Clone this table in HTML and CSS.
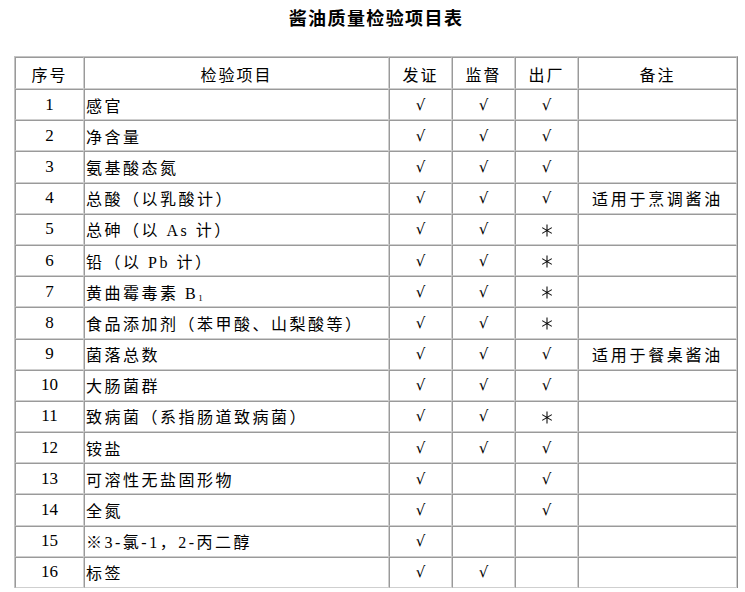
FILE: index.html
```html
<!DOCTYPE html>
<html lang="zh-CN">
<head>
<meta charset="utf-8">
<title>酱油质量检验项目表</title>
<link rel="stylesheet" href="styles.css">
</head>
<body>
<div class="page">
  <h1 class="title">酱油质量检验项目表</h1>
  <table class="grid">
    <colgroup>
      <col class="c-no"><col class="c-item"><col class="c-chk"><col class="c-chk"><col class="c-chk"><col class="c-note">
    </colgroup>
    <thead>
      <tr class="head"><th>序号</th><th>检验项目</th><th>发证</th><th>监督</th><th>出厂</th><th>备注</th></tr>
    </thead>
    <tbody>
      <tr><td class="no">1</td><td class="item">感官</td><td class="mk">√</td><td class="mk">√</td><td class="mk">√</td><td class="note"></td></tr>
      <tr><td class="no">2</td><td class="item">净含量</td><td class="mk">√</td><td class="mk">√</td><td class="mk">√</td><td class="note"></td></tr>
      <tr><td class="no">3</td><td class="item">氨基酸态氮</td><td class="mk">√</td><td class="mk">√</td><td class="mk">√</td><td class="note"></td></tr>
      <tr><td class="no">4</td><td class="item">总酸（以乳酸计）</td><td class="mk">√</td><td class="mk">√</td><td class="mk">√</td><td class="note">适用于烹调酱油</td></tr>
      <tr><td class="no">5</td><td class="item">总砷（以 As 计）</td><td class="mk">√</td><td class="mk">√</td><td class="mk"><svg class="star" viewBox="0 0 12 13" aria-label="*"><path d="M6 0.5V12.5M1.2 3.6L10.8 9.4M10.8 3.6L1.2 9.4"/></svg></td><td class="note"></td></tr>
      <tr><td class="no">6</td><td class="item">铅（以 Pb 计）</td><td class="mk">√</td><td class="mk">√</td><td class="mk"><svg class="star" viewBox="0 0 12 13" aria-label="*"><path d="M6 0.5V12.5M1.2 3.6L10.8 9.4M10.8 3.6L1.2 9.4"/></svg></td><td class="note"></td></tr>
      <tr><td class="no">7</td><td class="item">黄曲霉毒素 B<sub class="sub">1</sub></td><td class="mk">√</td><td class="mk">√</td><td class="mk"><svg class="star" viewBox="0 0 12 13" aria-label="*"><path d="M6 0.5V12.5M1.2 3.6L10.8 9.4M10.8 3.6L1.2 9.4"/></svg></td><td class="note"></td></tr>
      <tr><td class="no">8</td><td class="item">食品添加剂（苯甲酸、山梨酸等）</td><td class="mk">√</td><td class="mk">√</td><td class="mk"><svg class="star" viewBox="0 0 12 13" aria-label="*"><path d="M6 0.5V12.5M1.2 3.6L10.8 9.4M10.8 3.6L1.2 9.4"/></svg></td><td class="note"></td></tr>
      <tr><td class="no">9</td><td class="item">菌落总数</td><td class="mk">√</td><td class="mk">√</td><td class="mk">√</td><td class="note">适用于餐桌酱油</td></tr>
      <tr><td class="no">10</td><td class="item">大肠菌群</td><td class="mk">√</td><td class="mk">√</td><td class="mk">√</td><td class="note"></td></tr>
      <tr><td class="no">11</td><td class="item">致病菌（系指肠道致病菌）</td><td class="mk">√</td><td class="mk">√</td><td class="mk"><svg class="star" viewBox="0 0 12 13" aria-label="*"><path d="M6 0.5V12.5M1.2 3.6L10.8 9.4M10.8 3.6L1.2 9.4"/></svg></td><td class="note"></td></tr>
      <tr><td class="no">12</td><td class="item">铵盐</td><td class="mk">√</td><td class="mk">√</td><td class="mk">√</td><td class="note"></td></tr>
      <tr><td class="no">13</td><td class="item">可溶性无盐固形物</td><td class="mk">√</td><td class="mk"></td><td class="mk">√</td><td class="note"></td></tr>
      <tr><td class="no">14</td><td class="item">全氮</td><td class="mk">√</td><td class="mk"></td><td class="mk">√</td><td class="note"></td></tr>
      <tr><td class="no">15</td><td class="item">※3-氯-1，2-丙二醇</td><td class="mk">√</td><td class="mk"></td><td class="mk"></td><td class="note"></td></tr>
      <tr><td class="no">16</td><td class="item">标签</td><td class="mk">√</td><td class="mk">√</td><td class="mk"></td><td class="note"></td></tr>
    </tbody>
  </table>
</div>
</body>
</html>
```
FILE: styles.css
```css
html, body {
  margin: 0;
  padding: 0;
  background: #fff;
}
body {
  font-family: "Liberation Serif", "Noto Sans CJK SC", serif;
  color: #000;
}
.page {
  width: 724px;
  margin-left: 14px;
}
.title {
  margin: 0 0 22px 0;
  height: 34px;
  line-height: 34px;
  text-align: center;
  font-family: "Noto Sans CJK SC", sans-serif;
  font-weight: bold;
  font-size: 18px;
  letter-spacing: 1.4px;
}
.grid {
  width: 724px;
  table-layout: fixed;
  border-collapse: separate;
  border-spacing: 0;
  border-top: 1px solid #c4c4c4;
  border-left: 1px solid #c4c4c4;
  border-right: 1px solid #8a8a8a;
  font-size: 16px;
}
.c-no { width: 69px; }
.c-item { width: 305px; }
.c-chk { width: 63px; }
.c-note { width: auto; }
.grid th, .grid td {
  border-top: 1px solid #9a9a9a;
  border-left: 1px solid #9a9a9a;
  border-right: 1px solid #cfcfcf;
  border-bottom: 1px solid #cfcfcf;
  padding: 0 1px;
  font-weight: normal;
  white-space: nowrap;
  overflow: hidden;
}
.head { height: 32px; }
.grid tbody tr { height: 31.2px; }
.grid th {
  text-align: center;
  font-family: "Noto Sans CJK SC", sans-serif;
  font-size: 16px;
  letter-spacing: 2px;
  padding-top: 1px;
}
.no {
  text-align: center;
  font-size: 17px;
}
.item {
  text-align: left;
  font-family: "Liberation Serif", "Noto Sans CJK SC", serif;
  font-size: 16px;
  letter-spacing: 2.5px;
}
.mk {
  text-align: center;
  font-family: "DejaVu Serif", serif;
  font-size: 15px;
}
.star {
  display: inline-block;
  width: 12px;
  height: 13px;
  vertical-align: middle;
  fill: none;
  stroke: #111;
  stroke-width: 1.1;
}
.note {
  text-align: center;
  font-family: "Noto Sans CJK SC", sans-serif;
  font-size: 16px;
  letter-spacing: 2.7px;
}
.sub {
  font-size: 9px;
  vertical-align: -2px;
  letter-spacing: 0;
}
```
